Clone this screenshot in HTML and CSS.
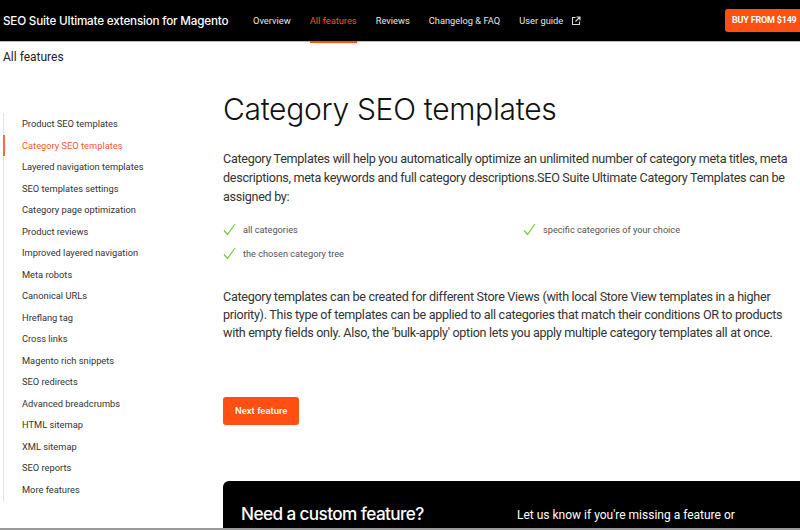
FILE: index.html
```html
<!DOCTYPE html>
<html lang="en">
<head>
    <meta charset="UTF-8">
    <meta name="viewport" content="width=device-width, initial-scale=1.0">
    <title>Category SEO templates</title>
    <link rel="stylesheet" href="styles.css">
</head>
<body>

<header class="topbar">
    <div class="brand">SEO Suite Ultimate extension for Magento</div>
    <nav class="topnav">
        <a href="#">Overview</a>
        <a href="#" class="active">All features</a>
        <a href="#">Reviews</a>
        <a href="#">Changelog &amp; FAQ</a>
        <a href="#">User guide
            <svg class="ext" width="10" height="10" viewBox="0 0 10 10" fill="none" stroke="#ddd" stroke-width="1.1">
                <path d="M4.5 1.5H1.5v7h7v-3"/>
                <path d="M5.5 1h3.5v3.5M9 1L4.5 5.5"/>
            </svg>
        </a>
    </nav>
    <a href="#" class="buy">BUY FROM $149</a>
</header>

<div class="crumb">All features</div>

<div class="layout">
    <aside class="sidebar">
        <ul>
            <li><a href="#">Product SEO templates</a></li>
            <li class="current"><a href="#">Category SEO templates</a></li>
            <li><a href="#">Layered navigation templates</a></li>
            <li><a href="#">SEO templates settings</a></li>
            <li><a href="#">Category page optimization</a></li>
            <li><a href="#">Product reviews</a></li>
            <li><a href="#">Improved layered navigation</a></li>
            <li><a href="#">Meta robots</a></li>
            <li><a href="#">Canonical URLs</a></li>
            <li><a href="#">Hreflang tag</a></li>
            <li><a href="#">Cross links</a></li>
            <li><a href="#">Magento rich snippets</a></li>
            <li><a href="#">SEO redirects</a></li>
            <li><a href="#">Advanced breadcrumbs</a></li>
            <li><a href="#">HTML sitemap</a></li>
            <li><a href="#">XML sitemap</a></li>
            <li><a href="#">SEO reports</a></li>
            <li><a href="#">More features</a></li>
        </ul>
    </aside>

    <main class="content">
        <h1>Category SEO templates</h1>
        <p class="lead">Category Templates will help you automatically optimize an unlimited number of category meta titles, meta descriptions, meta keywords and full category descriptions.SEO Suite Ultimate Category Templates can be assigned by:</p>

        <ul class="checks">
            <li><svg width="13" height="13" viewBox="0 0 13 13"><path d="M1 7.5l3.5 4L12 1" fill="none" stroke="#7ac943" stroke-width="1.2"/></svg>all categories</li>
            <li><svg width="13" height="13" viewBox="0 0 13 13"><path d="M1 7.5l3.5 4L12 1" fill="none" stroke="#7ac943" stroke-width="1.2"/></svg>specific categories of your choice</li>
            <li><svg width="13" height="13" viewBox="0 0 13 13"><path d="M1 7.5l3.5 4L12 1" fill="none" stroke="#7ac943" stroke-width="1.2"/></svg>the chosen category tree</li>
        </ul>

        <p class="lead second">Category templates can be created for different Store Views (with local Store View templates in a higher priority). This type of templates can be applied to all categories that match their conditions OR to products with empty fields only. Also, the 'bulk-apply' option lets you apply multiple category templates all at once.</p>

        <a href="#" class="next">Next feature</a>

        <section class="custom">
            <h2>Need a custom feature?</h2>
            <p>Let us know if you're missing a feature or something doesn't work as expected.</p>
        </section>
    </main>
</div>

<div class="bottom-line"></div>

</body>
</html>
```

FILE: styles.css
```css
html, body {
    margin: 0;
    overflow: hidden;
}
body {
    background: #fff;
    color: #222;
    font-family: 'Roboto', 'Liberation Sans', sans-serif;
    width: 800px;
    height: 530px;
}
a {
    text-decoration: none;
    color: inherit;
}
.topbar {
    display: flex;
    align-items: center;
    height: 41px;
    background: #000;
    border-bottom: 1px solid #bbb;
    padding: 0 0 0 3px;
}
.brand {
    color: #fff;
    font-family: 'Inter', 'Liberation Sans', sans-serif;
    font-size: 11.7px;
    font-weight: 500;
    letter-spacing: -0.2px;
    width: 250px;
}
.topnav {
    display: flex;
    height: 100%;
}
.topnav a {
    display: flex;
    align-items: center;
    gap: 8px;
    color: #e6e6e6;
    font-size: 9.3px;
    margin-right: 19px;
    position: relative;
}
.topnav a.active {
    color: #ff4f12;
}
.topnav a.active::after {
    content: "";
    position: absolute;
    left: 0;
    right: 0;
    bottom: -2px;
    height: 2px;
    background: #ff4f12;
}
.buy {
    margin-left: auto;
    background: #ff4f12;
    color: #fff;
    font-size: 9px;
    font-weight: 700;
    letter-spacing: -0.2px;
    line-height: 11px;
    padding: 6px 8px 6px 7px;
    border-radius: 3px 0 0 3px;
    width: 60px;
    white-space: nowrap;
}
.crumb {
    font-size: 12px;
    padding: 8px 3px 0;
    height: 22px;
}
.layout {
    display: flex;
    padding-top: 13px;
}
.sidebar {
    width: 220px;
    flex-shrink: 0;
    padding-left: 3px;
    padding-top: 28px;
}
.sidebar ul {
    list-style: none;
    margin: 0;
    padding: 0;
    border-left: 1px solid #e2e2e2;
    padding-bottom: 2px;
}
.sidebar li {
    height: 21.5px;
    display: flex;
    align-items: center;
    padding-left: 17px;
    font-size: 9.3px;
    color: #333;
    margin-left: -1px;
    border-left: 2px solid transparent;
}
.sidebar li.current {
    border-left-color: #ff6a3d;
    color: #ff5a2a;
}
.content {
    width: 600px;
    flex-shrink: 0;
}
.content h1 {
    font-family: 'Inter', 'Liberation Sans', sans-serif;
    font-size: 30px;
    font-weight: 300;
    letter-spacing: -0.3px;
    margin: 6px 0 22px;
    color: #111;
}
.lead {
    font-size: 12.6px;
    letter-spacing: -0.3px;
    line-height: 19px;
    color: #333;
    margin: 0;
    width: 572px;
}
.lead.second {
    line-height: 18px;
}
.checks {
    list-style: none;
    margin: 16px 0 28px;
    padding: 0;
    display: grid;
    grid-template-columns: 300px 1fr;
    row-gap: 10px;
}
.checks li {
    display: flex;
    align-items: center;
    gap: 7px;
    font-size: 9.2px;
    color: #555;
    height: 14px;
}
.next {
    display: inline-block;
    background: #ff4f12;
    color: #fff;
    font-size: 9.5px;
    font-weight: 500;
    line-height: 12px;
    padding: 8px 12px;
    border-radius: 3px;
    margin-top: 55px;
}
.custom {
    background: #000;
    border-radius: 6px 0 0 0;
    margin-top: 56px;
    height: 120px;
    display: flex;
    padding: 22px 0 0 18px;
    color: #fff;
}
.custom h2 {
    font-family: 'Inter', 'Liberation Sans', sans-serif;
    font-size: 17.2px;
    font-weight: 500;
    letter-spacing: -0.6px;
    margin: 0;
    width: 276px;
}
.custom p {
    font-size: 12px;
    margin: 3px 0 0;
    width: 240px;
    line-height: 19px;
}
.bottom-line {
    position: fixed;
    left: 0;
    right: 0;
    bottom: 0;
    height: 2px;
    background: #9a9a9a;
}
```
